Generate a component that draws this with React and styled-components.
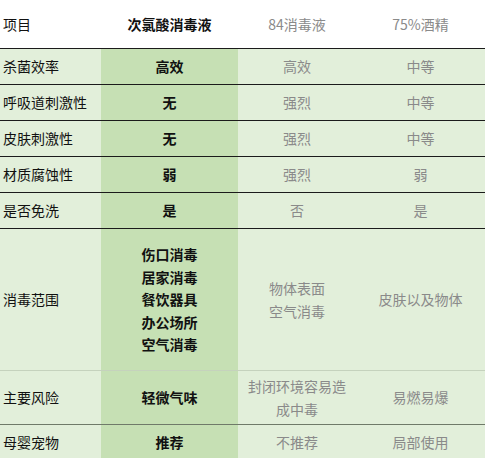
import React from "react";
import styled, { createGlobalStyle } from "styled-components";

const GlobalStyle = createGlobalStyle`
  body {
    margin: 0;
    background: #ffffff;
    font-family: "Noto Sans CJK SC", "Noto Sans", sans-serif;
  }
`;

const Table = styled.table`
  width: 485px;
  border-collapse: collapse;
  table-layout: fixed;
  font-size: 14px;
`;

const Row = styled.tr`
  height: ${(p) => p.$h}px;
  border-top: 1px solid ${(p) => p.$line || "transparent"};
`;

const Cell = styled.td`
  padding: 0 8px;
  vertical-align: middle;
  text-align: ${(p) => (p.$left ? "left" : "center")};
  padding-left: ${(p) => (p.$left ? "3px" : "8px")};
  background: ${(p) =>
    p.$head ? "#ffffff" : p.$strong ? "#c6e0b4" : "#e2efda"};
  color: ${(p) => (p.$muted ? "#8a8a8a" : "#111111")};
  font-weight: ${(p) => (p.$strong || p.$bold ? 700 : 400)};
  line-height: 22.5px;
`;

const columns = [101, 137, 118, 129];

const rows = [
  { h: 36, line: "#1b1b1b", cells: ["杀菌效率", "高效", "高效", "中等"] },
  { h: 36, line: "#1b1b1b", cells: ["呼吸道刺激性", "无", "强烈", "中等"] },
  { h: 36, line: "#1b1b1b", cells: ["皮肤刺激性", "无", "强烈", "中等"] },
  { h: 36, line: "#1b1b1b", cells: ["材质腐蚀性", "弱", "强烈", "弱"] },
  { h: 36, line: "#1b1b1b", cells: ["是否免洗", "是", "否", "是"] },
  {
    h: 142,
    line: "#1b1b1b",
    cells: [
      "消毒范围",
      ["伤口消毒", "居家消毒", "餐饮器具", "办公场所", "空气消毒"],
      ["物体表面", "空气消毒"],
      "皮肤以及物体",
    ],
  },
  {
    h: 54,
    line: "#c5d2bd",
    cells: ["主要风险", "轻微气味", "封闭环境容易造成中毒", "易燃易爆"],
  },
  { h: 34, line: "#6f7a69", cells: ["母婴宠物", "推荐", "不推荐", "局部使用"] },
];

const renderText = (value) =>
  Array.isArray(value)
    ? value.map((line, i) => <div key={i}>{line}</div>)
    : value;

const App = () => {
  return (
    <>
      <GlobalStyle />
      <Table>
        <colgroup>
          {columns.map((w, i) => (
            <col key={i} style={{ width: w }} />
          ))}
        </colgroup>
        <tbody>
          <Row $h={48}>
            <Cell $head $left>项目</Cell>
            <Cell $head $bold>次氯酸消毒液</Cell>
            <Cell $head $muted>84消毒液</Cell>
            <Cell $head $muted>75%酒精</Cell>
          </Row>
          {rows.map((row, i) => (
            <Row key={i} $h={row.h} $line={row.line}>
              <Cell $left>{row.cells[0]}</Cell>
              <Cell $strong>{renderText(row.cells[1])}</Cell>
              <Cell $muted>{renderText(row.cells[2])}</Cell>
              <Cell $muted>{renderText(row.cells[3])}</Cell>
            </Row>
          ))}
        </tbody>
      </Table>
    </>
  );
};

export default App;
